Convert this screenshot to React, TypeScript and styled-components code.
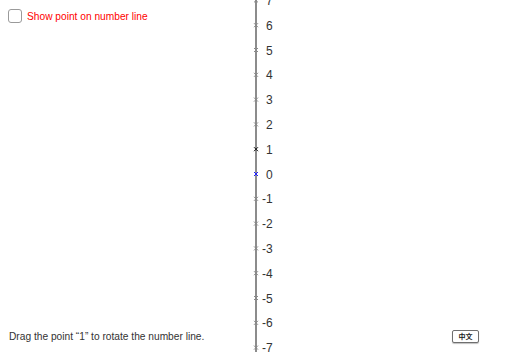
import styled, { createGlobalStyle } from "styled-components";

const GlobalStyle = createGlobalStyle`
  html, body {
    margin: 0;
    padding: 0;
    background: #fff;
  }
  body {
    font-family: "Liberation Sans", Arial, sans-serif;
  }
`;

const Applet = styled.div`
  position: relative;
  width: 512px;
  height: 352px;
  overflow: hidden;
  background: #fff;
  display: flex;
  flex-direction: column;
  justify-content: space-between;
`;

const Canvas = styled.svg`
  position: absolute;
  inset: 0;
  pointer-events: none;
`;

const TopRow = styled.label`
  position: relative;
  display: flex;
  align-items: center;
  gap: 5px;
  padding: 9px 0 0 8px;
  font-size: 10.2px;
  color: #ff0000;
  cursor: pointer;
`;

const Box = styled.span`
  width: 12px;
  height: 12px;
  border: 1px solid #9a9a9a;
  border-radius: 3px;
  background: #fff;
`;

const BottomRow = styled.div`
  position: relative;
  display: flex;
  align-items: center;
  justify-content: space-between;
  padding: 0 33px 9px 9px;
`;

const Hint = styled.span`
  font-size: 10.2px;
  color: #333;
`;

const LangButton = styled.button`
  width: 27px;
  height: 13px;
  padding: 0;
  border: 1px solid #6f6f6f;
  border-radius: 2px;
  background: #fff;
  font-family: "Noto Sans CJK SC", sans-serif;
  font-size: 7px;
  font-weight: 700;
  line-height: 11px;
  color: #222;
  box-shadow: 0 1px 1px rgba(0, 0, 0, 0.25);
`;

const X0 = 256;
const Y0 = 174;
const STEP = 24.8;
const ticks = [7, 6, 5, 4, 3, 2, 1, 0, -1, -2, -3, -4, -5, -6, -7];

const Cross = ({ y, color }: { y: number; color: string }) => (
  <g stroke={color} strokeWidth={1}>
    <line x1={X0 - 2} y1={y - 2} x2={X0 + 2} y2={y + 2} />
    <line x1={X0 + 2} y1={y - 2} x2={X0 - 2} y2={y + 2} />
  </g>
);

export const App = () => {
  return (
    <Applet>
      <GlobalStyle />
      <Canvas width={512} height={352} viewBox="0 0 512 352">
        <line x1={X0} y1={-5} x2={X0} y2={360} stroke="#8c8c8c" strokeWidth={2} />
        {ticks.map((n) => {
          const y = Y0 - n * STEP;
          const color = n === 0 ? "#2020ff" : n === 1 ? "#111" : "#888";
          return (
            <g key={n}>
              <Cross y={y} color={color} />
              <text
                x={n < 0 ? 262 : 266}
                y={y + 4.5}
                fontSize={12}
                fontFamily="Liberation Sans, Arial, sans-serif"
                fill="#333"
              >
                {n}
              </text>
            </g>
          );
        })}
      </Canvas>
      <TopRow>
        <Box />
        <span>Show point on number line</span>
      </TopRow>
      <BottomRow>
        <Hint>Drag the point “1” to rotate the number line.</Hint>
        <LangButton>中文</LangButton>
      </BottomRow>
    </Applet>
  );
};

export default App;
